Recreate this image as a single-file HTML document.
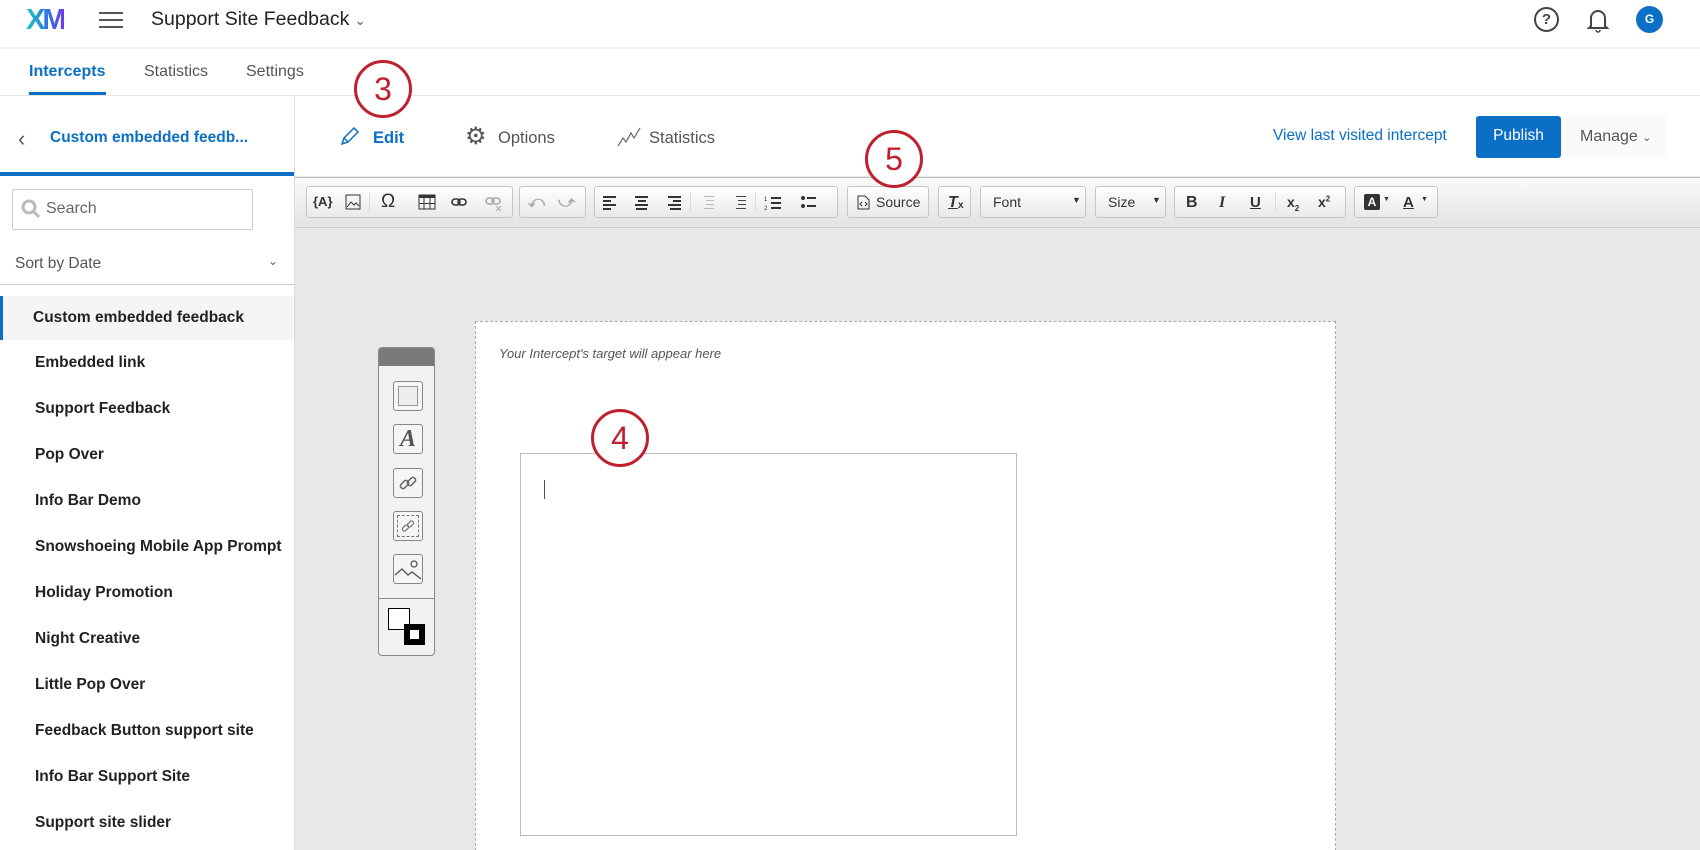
<!DOCTYPE html>
<html style="width:1700px;height:850px;overflow:hidden"><head><meta charset="utf-8"><style>
*{box-sizing:border-box;margin:0;padding:0}
body{width:1700px;height:850px;overflow:hidden;background:#fff;font-family:"Liberation Sans",sans-serif;position:relative;color:#333}
.a{position:absolute}
.btn{position:absolute;top:186px;height:32px;border:1px solid #c6c6c6;border-radius:3px;background:linear-gradient(#fff,#e9e9e9)}
.ic{position:absolute;top:7px;font-size:14px;color:#333;font-weight:bold}
.li{position:absolute;left:35px;font-size:15.5px;font-weight:bold;color:#222}
.circ{position:absolute;border:3px solid #c0202e;border-radius:50%;background:#fff;color:#c0202e;font-size:32px;text-align:center}
.pb{position:absolute;left:14px;width:30px;height:30px;border:1px solid #888;border-radius:3px;background:#f5f5f5}
</style></head><body>
<div class="a" style="left:26px;top:4px;font-size:29px;font-weight:bold;letter-spacing:-3px;background:linear-gradient(90deg,#1ec8c8,#2a7de1,#6a3de8);-webkit-background-clip:text;color:transparent">XM</div>
<div class="a" style="left:99px;top:12px;width:24px;height:2px;background:#555"></div>
<div class="a" style="left:99px;top:19px;width:24px;height:2px;background:#555"></div>
<div class="a" style="left:99px;top:26px;width:24px;height:2px;background:#555"></div>
<div class="a" style="left:151px;top:8px;font-size:19.5px;color:#222">Support Site Feedback <span style="font-size:13px;color:#555">&#8964;</span></div>
<div class="a" style="left:1534px;top:7px;width:25px;height:25px;border:2px solid #444;border-radius:50%;text-align:center;font-size:15px;line-height:21px;font-weight:bold;color:#444">?</div>
<svg class="a" style="left:1586px;top:6px" width="24" height="28" viewBox="0 0 24 28"><path d="M5 20V12a7 7 0 0 1 14 0v8l2 2H3z" fill="none" stroke="#444" stroke-width="2"/><path d="M10 24a2 2 0 0 0 4 0" fill="none" stroke="#444" stroke-width="1.5"/></svg>
<div class="a" style="left:1636px;top:6px;width:27px;height:27px;border-radius:50%;background:#0b6fc6;color:#fff;font-size:12px;font-weight:bold;text-align:center;line-height:27px">G</div>
<div class="a" style="left:0;top:47px;width:1700px;height:2px;background:#f0f0f0"></div>
<div class="a" style="left:29px;top:63px;font-size:16px;font-weight:bold;color:#0b6fc6">Intercepts</div>
<div class="a" style="left:144px;top:63px;font-size:16px;color:#555">Statistics</div>
<div class="a" style="left:246px;top:63px;font-size:16px;color:#555">Settings</div>
<div class="a" style="left:29px;top:92px;width:77px;height:3px;background:#0b6fc6"></div>
<div class="a" style="left:0;top:95px;width:1700px;height:1px;background:#e5e5e5"></div>
<div class="a" style="left:294px;top:96px;width:1px;height:754px;background:#ddd"></div>
<div class="a" style="left:18px;top:126px;font-size:22px;color:#555">&#8249;</div>
<div class="a" style="left:50px;top:129px;font-size:15.5px;font-weight:bold;color:#0b6fc6">Custom embedded feedb...</div>
<div class="a" style="left:0;top:172px;width:294px;height:4px;background:#0b6fc6"></div>
<div class="a" style="left:12px;top:189px;width:241px;height:41px;border:1px solid #ccc;border-radius:2px"></div>
<svg class="a" style="left:21px;top:199px" width="20" height="20"><circle cx="8" cy="8" r="6" fill="none" stroke="#bbb" stroke-width="3"/><path d="M12 12l6 6" stroke="#bbb" stroke-width="3"/></svg>
<div class="a" style="left:46px;top:200px;font-size:16px;color:#666">Search</div>
<div class="a" style="left:15px;top:255px;font-size:15.5px;color:#555">Sort by Date</div>
<div class="a" style="left:268px;top:254px;font-size:12px;color:#666">&#8964;</div>
<div class="a" style="left:0;top:284px;width:294px;height:1px;background:#ccc"></div>
<div class="a" style="left:0;top:296px;width:294px;height:44px;background:#f5f5f5;border-left:3px solid #0b6fc6"></div>
<div class="li" style="left:33px;top:309px">Custom embedded feedback</div>
<div class="li" style="top:354px">Embedded link</div>
<div class="li" style="top:400px">Support Feedback</div>
<div class="li" style="top:446px">Pop Over</div>
<div class="li" style="top:492px">Info Bar Demo</div>
<div class="li" style="top:538px">Snowshoeing Mobile App Prompt</div>
<div class="li" style="top:584px">Holiday Promotion</div>
<div class="li" style="top:630px">Night Creative</div>
<div class="li" style="top:676px">Little Pop Over</div>
<div class="li" style="top:722px">Feedback Button support site</div>
<div class="li" style="top:768px">Info Bar Support Site</div>
<div class="li" style="top:814px">Support site slider</div>
<svg class="a" style="left:339px;top:125px" width="22" height="22"><path d="M3 19l2-6L15 3l4 4L9 17z M5 13l4 4" fill="none" stroke="#0b6fc6" stroke-width="1.5"/></svg>
<div class="a" style="left:373px;top:129px;font-size:16.5px;font-weight:bold;color:#0b6fc6">Edit</div>
<div class="a" style="left:465px;top:122px;font-size:24px;color:#555">&#9881;</div>
<div class="a" style="left:498px;top:129px;font-size:16.5px;color:#555">Options</div>
<svg class="a" style="left:616px;top:126px" width="26" height="22"><path d="M2 20l5-8 3 4 5-9 3 5 6-10" fill="none" stroke="#666" stroke-width="1.2"/></svg>
<div class="a" style="left:649px;top:129px;font-size:16.5px;color:#555">Statistics</div>
<div class="a" style="left:1273px;top:127px;font-size:15.5px;color:#0b6fc6">View last visited intercept</div>
<div class="a" style="left:1476px;top:116px;width:85px;height:42px;background:#0b6fc6;border-radius:3px;color:#fff;font-size:15.5px;text-align:center;line-height:40px">Publish</div>
<div class="a" style="left:1566px;top:116px;width:100px;height:42px;background:#fafafa;color:#555;font-size:16px;line-height:42px;padding-left:14px">Manage <span style="font-size:11px">&#8964;</span></div>
<div class="a" style="left:295px;top:176px;width:1405px;height:674px;background:#e8e8e8"></div>
<div class="a" style="left:295px;top:177px;width:1405px;height:51px;background:linear-gradient(#fafafa,#e3e3e3);border-top:1px solid #bbb;border-bottom:1px solid #ccc"></div>
<div class="btn" style="left:306px;width:207px">
<span class="ic" style="left:6px;font-size:13px">{A}</span>
<svg class="a" style="left:38px;top:7px" width="16" height="16"><rect x="1" y="1" width="14" height="14" fill="none" stroke="#333"/><path d="M2 13l4-5 3 3 2-2 3 3" fill="none" stroke="#333"/></svg>
<span class="a" style="left:62px;top:5px;width:1px;height:20px;background:#ddd"></span>
<span class="ic" style="left:74px;top:4px;font-size:19px;font-weight:normal">&#937;</span>
<svg class="a" style="left:111px;top:7px" width="18" height="16"><rect x="1" y="1" width="16" height="14" fill="none" stroke="#333"/><rect x="1" y="1" width="16" height="3" fill="#333"/><path d="M6 4v11M12 4v11M1 9.5h16" stroke="#333"/></svg>
<svg class="a" style="left:144px;top:10px" width="16" height="10"><rect x="1" y="2" width="8" height="6" rx="3" fill="none" stroke="#333" stroke-width="1.6"/><rect x="7" y="2" width="8" height="6" rx="3" fill="none" stroke="#333" stroke-width="1.6"/></svg>
<svg class="a" style="left:178px;top:9px" width="18" height="16"><rect x="1" y="2" width="8" height="6" rx="3" fill="none" stroke="#aaa" stroke-width="1.6"/><rect x="7" y="2" width="8" height="6" rx="3" fill="none" stroke="#aaa" stroke-width="1.6"/><path d="M11 10l5 5M16 10l-5 5" stroke="#aaa"/></svg>
</div>
<div class="btn" style="left:519px;width:67px"><span class="ic" style="left:8px;color:#aaa;font-size:16px">&#10554;</span><span class="ic" style="left:38px;color:#aaa;font-size:16px">&#10555;</span></div>
<div class="btn" style="left:594px;width:244px">
<svg class="a" style="left:8px;top:0" width="236" height="30">
<g fill="#333"><rect x="0" y="9" width="13" height="2"/><rect x="0" y="13" width="8" height="2"/><rect x="0" y="17" width="13" height="2"/><rect x="0" y="21" width="8" height="2"/>
<rect x="32" y="9" width="13" height="2"/><rect x="35" y="13" width="8" height="2"/><rect x="32" y="17" width="13" height="2"/><rect x="33" y="21" width="11" height="2"/>
<rect x="65" y="9" width="13" height="2"/><rect x="70" y="13" width="8" height="2"/><rect x="65" y="17" width="13" height="2"/><rect x="67" y="21" width="11" height="2"/></g>
<rect x="87" y="5" width="1" height="20" fill="#ddd"/>
<g fill="#bbb"><rect x="101" y="9" width="10" height="1"/><rect x="103" y="13" width="8" height="1"/><rect x="103" y="17" width="8" height="1"/><rect x="101" y="21" width="10" height="1"/></g>
<g fill="#444"><rect x="133" y="9" width="10" height="1"/><rect x="135" y="13" width="8" height="1"/><rect x="135" y="17" width="8" height="1"/><rect x="133" y="21" width="10" height="1"/></g>
<rect x="152" y="5" width="1" height="20" fill="#ddd"/>
<g fill="#333"><rect x="168" y="10" width="10" height="2"/><rect x="168" y="15" width="10" height="2"/><rect x="168" y="20" width="10" height="2"/><circle cx="200" cy="11" r="2"/><circle cx="200" cy="19" r="2"/><rect x="204" y="10" width="9" height="2"/><rect x="204" y="18" width="9" height="2"/></g>
<text x="161" y="14" font-size="6" fill="#333">1</text><text x="161" y="23" font-size="6" fill="#333">2</text>
</svg></div>
<div class="btn" style="left:847px;width:82px"><svg class="a" style="left:9px;top:8px" width="13" height="15"><path d="M1 1h7l4 4v9H1z" fill="none" stroke="#333"/><path d="M5 7l-2 2 2 2M8 7l2 2-2 2" fill="none" stroke="#333"/></svg><span class="a" style="left:28px;top:7px;font-size:14px;color:#333">Source</span></div>
<div class="btn" style="left:938px;width:33px"><span class="ic" style="left:9px;font-style:italic;font-size:16px;text-decoration:underline">T</span><span class="a" style="left:19px;top:13px;font-size:10px;font-weight:bold">x</span></div>
<div class="btn" style="left:980px;width:106px"><span class="a" style="left:12px;top:7px;font-size:14px">Font</span><span class="a" style="left:91px;top:8px;font-size:9px">&#9660;</span></div>
<div class="btn" style="left:1095px;width:71px"><span class="a" style="left:12px;top:7px;font-size:14px">Size</span><span class="a" style="left:56px;top:8px;font-size:9px">&#9660;</span></div>
<div class="btn" style="left:1174px;width:172px">
<span class="ic" style="left:11px;font-size:16px">B</span><span class="ic" style="left:44px;font-size:16px;font-style:italic;font-family:'Liberation Serif',serif">I</span><span class="ic" style="left:75px;font-size:15px;text-decoration:underline">U</span>
<span class="a" style="left:100px;top:5px;width:1px;height:20px;background:#ddd"></span>
<span class="ic" style="left:112px">x<sub style="font-size:8px">2</sub></span><span class="ic" style="left:143px">x<sup style="font-size:8px">2</sup></span></div>
<div class="btn" style="left:1354px;width:84px"><span class="a" style="left:9px;top:7px;width:16px;height:16px;background:#333;border-radius:2px;color:#fff;font-size:12px;font-weight:bold;text-align:center;line-height:16px">A</span><span class="a" style="left:28px;top:9px;font-size:7px">&#9660;</span><span class="ic" style="left:48px;font-size:15px;text-decoration:underline">A</span><span class="a" style="left:66px;top:9px;font-size:7px">&#9660;</span></div>
<div class="a" style="left:475px;top:321px;width:861px;height:540px;background:#fff;border:1px dashed #aaa"></div>
<div class="a" style="left:499px;top:346px;font-size:13px;font-style:italic;color:#555">Your Intercept's target will appear here</div>
<div class="a" style="left:520px;top:453px;width:497px;height:383px;border:1px solid #bbb;background:#fff"></div>
<div class="a" style="left:544px;top:480px;width:1px;height:19px;background:#555"></div>
<div class="a" style="left:378px;top:347px;width:57px;height:309px;background:#f2f2f5;border:1px solid #888;border-radius:4px;overflow:hidden">
<div style="height:18px;background:#7a7a7a"></div>
<div class="pb" style="top:33px"><div style="margin:4px;width:20px;height:20px;border:1px solid #999;background:#eee"></div></div>
<div class="pb" style="top:76px;font-family:'Liberation Serif',serif;font-style:italic;font-weight:bold;font-size:24px;text-align:center;line-height:28px;color:#555">A</div>
<div class="pb" style="top:120px"><svg width="28" height="28"><rect x="6" y="13" width="9" height="5" rx="2" transform="rotate(-45 10.5 15.5)" fill="none" stroke="#666" stroke-width="1.5"/><rect x="13" y="10" width="9" height="5" rx="2" transform="rotate(-45 17.5 12.5)" fill="none" stroke="#666" stroke-width="1.5"/></svg></div>
<div class="pb" style="top:163px"><div style="margin:3px;width:22px;height:22px;border:1px dashed #777;position:relative"><svg width="20" height="20" style="position:absolute;left:0;top:0"><rect x="4" y="10" width="7" height="4" rx="2" transform="rotate(-45 7.5 12)" fill="none" stroke="#777" stroke-width="1.2"/><rect x="9" y="6" width="7" height="4" rx="2" transform="rotate(-45 12.5 8)" fill="none" stroke="#777" stroke-width="1.2"/></svg></div></div>
<div class="pb" style="top:206px"><svg width="28" height="28"><path d="M1 20l7-6 6 6 4-3 9 7" fill="none" stroke="#555" stroke-width="1.3"/><circle cx="20" cy="9" r="3" fill="none" stroke="#555" stroke-width="1.3"/></svg></div>
<div style="position:absolute;left:0;top:250px;width:57px;height:1px;background:#888"></div>
<div style="position:absolute;left:9px;top:260px;width:22px;height:22px;background:#fff;border:1px solid #000"></div>
<div style="position:absolute;left:25px;top:276px;width:21px;height:21px;background:#000"><div style="margin:6px;width:9px;height:9px;background:#fff"></div></div>
</div>
<div class="circ" style="left:354px;top:60px;width:58px;height:58px;line-height:52px">3</div>
<div class="circ" style="left:591px;top:409px;width:58px;height:58px;line-height:52px">4</div>
<div class="circ" style="left:865px;top:130px;width:58px;height:58px;line-height:52px">5</div>
</body></html>
